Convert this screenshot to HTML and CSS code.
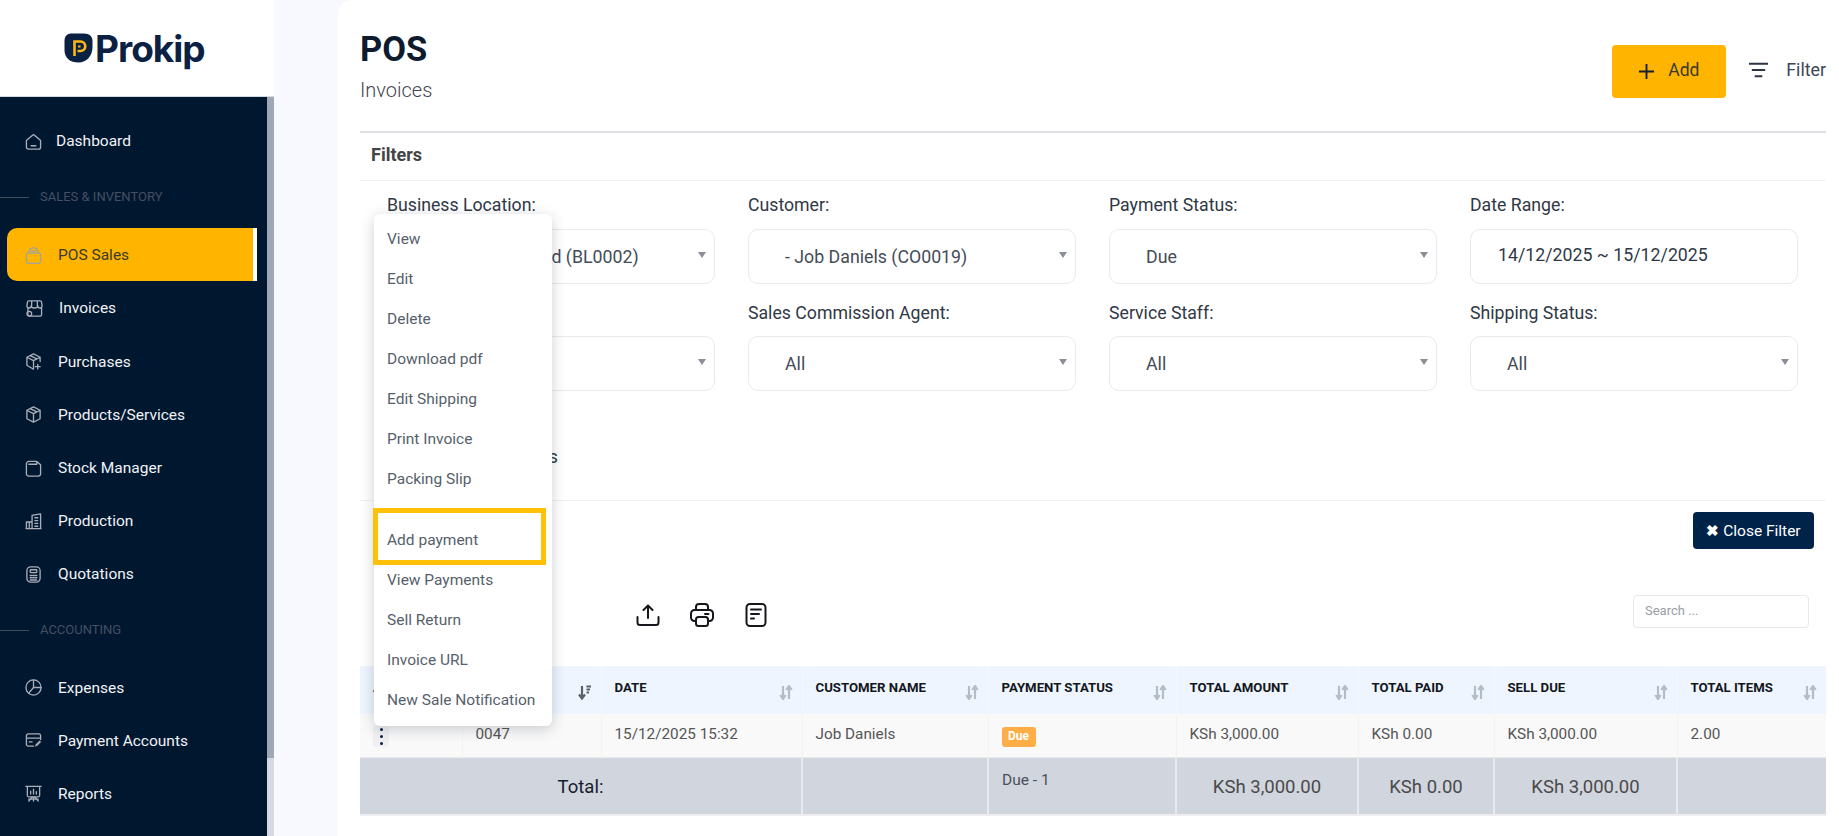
FILE: index.html
```html
<!DOCTYPE html>
<html lang="en">
<head>
<meta charset="utf-8">
<title>POS Invoices</title>
<link rel="stylesheet" href="styles.css">
</head>
<body>
<div class="app">
  <aside class="sidebar">
    <div class="brand">
      <svg class="brand-mark" viewBox="0 0 29 30"><path d="M8 0.500h12c5.500 0 8.500 3 8.500 7.500v6c0 9-6 15.500-14 15.500C6 29.500 0.500 25 0.500 17V8C0.500 3 3 0.500 8 0.500z" fill="#0b2143"/><path d="M10.500 23V8.500h6a4.700 4.700 0 0 1 0 9.500h-3" fill="none" stroke="#fdb913" stroke-width="2.600"/><path d="M14 13.500h2.500" fill="none" stroke="#fdb913" stroke-width="2"/></svg>
      <span class="brand-name">Prokip</span>
    </div>
    <div class="side-body">
      <nav class="nav">
        <a class="nav-item nav-home"><svg class="ico" viewBox="0 0 18 18"><path d="M2 7.500 8 2.300a1.500 1.500 0 0 1 2 0l6 5.200a1.500 1.500 0 0 1 .5 1.100V15a2 2 0 0 1-2 2h-11a2 2 0 0 1-2-2V8.600a1.500 1.500 0 0 1 .5-1.100zM6.500 13.500h5"/></svg><span>Dashboard</span></a>
        <div class="nav-section nav-section-first"><i></i><span>SALES &amp; INVENTORY</span></div>
        <a class="nav-item active"><svg class="ico" viewBox="0 0 18 18"><path d="M3 6.500h12a1.500 1.500 0 0 1 1.500 1.500v6.500a3 3 0 0 1-3 3h-9a3 3 0 0 1-3-3V8A1.500 1.500 0 0 1 3 6.500zM4 6.500C4 3 6 1 9 1s5 2 5 5.500M6.500 4.500h5"/></svg><span>POS Sales</span></a>
        <a class="nav-item nav-inv"><svg class="ico" viewBox="0 0 18 18"><path d="M3 1h12a1.500 1.500 0 0 1 1.500 1.500L17 6c0 1.500-1 2.500-2.200 2.500S12.500 7.500 12.500 6c0 1.500-1.200 2.500-3.500 2.500S5.500 7.500 5.500 6c0 1.500-1 2.500-2.300 2.500S1 7.500 1 6l.5-3.500A1.500 1.500 0 0 1 3 1zM6 1.200V6M12 1.200V6M2 8v7.500A1.500 1.500 0 0 0 3.500 17H15a1.500 1.500 0 0 0 1.500-1.500V8"/><circle cx="3.500" cy="14.500" r="2.500"/></svg><span>Invoices</span></a>
        <a class="nav-item"><svg class="ico" viewBox="0 0 18 18"><path d="M9 1 2 4.500v8.500l6.500 4M9 1l7 3.500V9M2 4.500 9 8l7-3.500M9 8v9M5.500 2.800l7 3.500M13.500 12v5M11 14.500h5"/></svg><span>Purchases</span></a>
        <a class="nav-item"><svg class="ico" viewBox="0 0 18 18"><path d="M9 1 2 4.500v9L9 17l7-3.500v-9zM2 4.500 9 8l7-3.500M9 8v9M5.500 2.800l7 3.500"/></svg><span>Products/Services</span></a>
        <a class="nav-item"><svg class="ico" viewBox="0 0 18 18"><path d="M4 1.500h8.500L16.500 5v9.500a2.500 2.500 0 0 1-2.500 2.500H4a2.500 2.500 0 0 1-2.500-2.500V4A2.500 2.500 0 0 1 4 1.500zM4 4.500h8.500V1.500"/></svg><span>Stock Manager</span></a>
        <a class="nav-item"><svg class="ico" viewBox="0 0 18 18"><path d="M1.500 16.500V9.500h6v7zM7.500 16.500V2.500L16.500 1v15.500zM1 16.500h16M4.500 9.500v7M10.500 5h3M10.500 8h3M10.500 11h3M10.500 14h3"/></svg><span>Production</span></a>
        <a class="nav-item"><svg class="ico" viewBox="0 0 18 18"><rect x="2" y="1" width="14" height="16" rx="4"/><rect x="5.500" y="4" width="7" height="3" rx=".8"/><path d="M5.500 10h1.500M8.300 10h1.500M11 10h1.500M5.500 12.500h1.500M8.300 12.500h1.500M11 12.500h1.500M5.500 14.800h7" stroke-width="1.500"/></svg><span>Quotations</span></a>
        <div class="nav-section"><i></i><span>ACCOUNTING</span></div>
        <a class="nav-item"><svg class="ico" viewBox="0 0 18 18"><circle cx="9" cy="9" r="8"/><path d="M9 1v8h8M9 9l-5 6"/></svg><span>Expenses</span></a>
        <a class="nav-item"><svg class="ico" viewBox="0 0 18 18"><path d="M9 15H3.500a2 2 0 0 1-2-2V4a2 2 0 0 1 2-2h11a2 2 0 0 1 2 2v4M1.500 6.500h15M4.500 10.500h3"/><path class="ico-fill" d="m10 16 1-3 4.500-4.500 2 2L13 15z"/></svg><span>Payment Accounts</span></a>
        <a class="nav-item"><svg class="ico" viewBox="0 0 18 18"><path d="M1 1.500h16M2.500 1.500v9.500a1.500 1.500 0 0 0 1.500 1.500h10a1.500 1.500 0 0 0 1.500-1.500V1.500M6 6.500v3M9 4.500v5M12 7v2.500M9 12.500V17M4 17l4-4.500M14 17l-4-4.500M4 15h10"/></svg><span>Reports</span></a>
      </nav>
      <div class="side-scroll"><div class="side-thumb"></div></div>
    </div>
  </aside>

  <main class="card">
    <header class="page-head">
      <div class="titles">
        <h1>POS</h1>
        <p>Invoices</p>
      </div>
      <div class="head-actions">
        <button class="btn-add"><svg class="plus" viewBox="0 0 18 18"><path d="M9 1v16M1 9h16"/></svg><span>Add</span></button>
        <div class="filter-toggle"><svg class="lines" viewBox="0 0 22 16"><path d="M1 1.500h20M4 8h14M7 14.500h8"/></svg><span>Filter</span></div>
      </div>
    </header>

    <section class="filters">
      <h2>Filters</h2>
      <div class="filter-grid">
        <div class="field"><label>Business Location:</label><div class="select loc">Prokip Co Limited (BL0002)</div></div>
        <div class="field"><label>Customer:</label><div class="select">- Job Daniels (CO0019)</div></div>
        <div class="field"><label>Payment Status:</label><div class="select">Due</div></div>
        <div class="field"><label>Date Range:</label><div class="select date">14/12/2025 ~ 15/12/2025</div></div>
        <div class="field"><label>User:</label><div class="select">All</div></div>
        <div class="field"><label>Sales Commission Agent:</label><div class="select">All</div></div>
        <div class="field"><label>Service Staff:</label><div class="select">All</div></div>
        <div class="field"><label>Shipping Status:</label><div class="select">All</div></div>
      </div>
      <div class="check-row">Subscriptions</div>
      <div class="close-row"><button class="btn-close"><b>✖</b> Close Filter</button></div>
    </section>

    <div class="toolbar">
      <div class="tools">
        <svg class="tool" viewBox="0 0 24 24"><path d="M12 15V2.500M7.500 7 12 2.500 16.500 7M1.500 14v5.500a2.500 2.500 0 0 0 2.500 2.500h16a2.500 2.500 0 0 0 2.500-2.500V14"/></svg>
        <svg class="tool" viewBox="0 0 24 24"><path d="M6 7V4a3 3 0 0 1 3-3h6a3 3 0 0 1 3 3v3M6 18H4.500A3.500 3.500 0 0 1 1 14.500V10.500A3.500 3.500 0 0 1 4.500 7h15a3.500 3.500 0 0 1 3.500 3.500v4a3.500 3.500 0 0 1-3.500 3.500H18M15 11h3.500"/><rect x="6" y="14" width="12" height="9" rx="2.500"/></svg>
        <svg class="tool" viewBox="0 0 24 24"><rect x="2.500" y="1" width="19" height="22" rx="3.500"/><path d="M7 6.500h10M7 11h8M7 15.500h3"/></svg>
      </div>
      <div class="search">Search ...</div>
    </div>

    <table class="grid">
      <colgroup><col class="c1"><col class="c2"><col class="c3"><col class="c4"><col class="c5"><col class="c6"><col class="c7"><col class="c8"><col class="c9"></colgroup>
      <thead>
        <tr>
          <th>ACTION</th>
          <th class="sorted">INVOICE NO.<svg class="sort" viewBox="0 0 14 15"><path d="M4 1v12M1 9.500l3 4 3-4M8.500 1.500H13M8.500 4.500H12M8.500 7.500H11" /></svg></th>
          <th>DATE<svg class="sort" viewBox="0 0 14 15"><path d="M4 1v12M1.300 10 4 14l2.700-4M10 14V2M7.300 5 10 1l2.700 4"/></svg></th>
          <th>CUSTOMER NAME<svg class="sort" viewBox="0 0 14 15"><path d="M4 1v12M1.300 10 4 14l2.700-4M10 14V2M7.300 5 10 1l2.700 4"/></svg></th>
          <th>PAYMENT STATUS<svg class="sort" viewBox="0 0 14 15"><path d="M4 1v12M1.300 10 4 14l2.700-4M10 14V2M7.300 5 10 1l2.700 4"/></svg></th>
          <th>TOTAL AMOUNT<svg class="sort" viewBox="0 0 14 15"><path d="M4 1v12M1.300 10 4 14l2.700-4M10 14V2M7.300 5 10 1l2.700 4"/></svg></th>
          <th>TOTAL PAID<svg class="sort" viewBox="0 0 14 15"><path d="M4 1v12M1.300 10 4 14l2.700-4M10 14V2M7.300 5 10 1l2.700 4"/></svg></th>
          <th>SELL DUE<svg class="sort" viewBox="0 0 14 15"><path d="M4 1v12M1.300 10 4 14l2.700-4M10 14V2M7.300 5 10 1l2.700 4"/></svg></th>
          <th>TOTAL ITEMS<svg class="sort" viewBox="0 0 14 15"><path d="M4 1v12M1.300 10 4 14l2.700-4M10 14V2M7.300 5 10 1l2.700 4"/></svg></th>
        </tr>
      </thead>
      <tbody>
        <tr>
          <td class="cell-action"><span class="kebab"><i></i><i></i><i></i></span></td>
          <td>0047</td>
          <td>15/12/2025 15:32</td>
          <td>Job Daniels</td>
          <td><span class="badge">Due</span></td>
          <td>KSh 3,000.00</td>
          <td>KSh 0.00</td>
          <td>KSh 3,000.00</td>
          <td>2.00</td>
        </tr>
      </tbody>
      <tfoot>
        <tr>
          <td colspan="3" class="foot-label">Total:</td>
          <td></td>
          <td class="foot-status">Due - 1</td>
          <td>KSh 3,000.00</td>
          <td>KSh 0.00</td>
          <td>KSh 3,000.00</td>
          <td></td>
        </tr>
      </tfoot>
    </table>

    <ul class="menu">
      <li>View</li>
      <li>Edit</li>
      <li>Delete</li>
      <li>Download pdf</li>
      <li>Edit Shipping</li>
      <li>Print Invoice</li>
      <li>Packing Slip</li>
      <li class="menu-hl">Add payment</li>
      <li>View Payments</li>
      <li>Sell Return</li>
      <li>Invoice URL</li>
      <li>New Sale Notification</li>
    </ul>
  </main>
</div>
</body>
</html>
```
FILE: styles.css
```css
* { box-sizing: border-box; }
html, body { margin: 0; padding: 0; height: 100%; overflow: hidden; }
body { font-family: Roboto, "Liberation Sans", sans-serif; background: #f8f9fe; color: #333; }
button { font-family: inherit; border: 0; padding: 0; }

.app { display: flex; width: 1839px; height: 836px; overflow: hidden; }

/* sidebar */
.sidebar { width: 274px; flex: none; display: flex; flex-direction: column; }
.brand { height: 97px; background: #fff; border-bottom: 1px solid #d5d8de; display: flex; align-items: flex-start; padding: 32px 0 0 64px; }
.brand-mark { width: 29px; height: 30px; flex: none; margin-top: 1px; }
.brand-name { font-family: Inter, sans-serif; font-weight: 700; font-size: 37px; line-height: 34px; letter-spacing: -1px; color: #0b2143; margin-left: 2px; }
.side-body { flex: 1; display: flex; min-height: 0; }
.nav { width: 267px; background: #001730; padding-top: 16.500px; flex: none; }
.side-scroll { flex: 1; background: #d6d9e1; }
.side-thumb { height: 661px; background: #a0a7b5; }

.nav-item { display: flex; align-items: center; height: 53.200px; padding: 2px 0 0 25px; color: #f0f3f7; font-size: 15.500px; }
.nav-item span { margin-left: 16px; }
.nav-home span { margin-left: 14px; }
.nav-inv { padding-left: 26px; }
.ico { width: 17px; height: 17px; fill: none; stroke: #a8afb9; stroke-width: 1.400; stroke-linecap: round; stroke-linejoin: round; flex: none; }
.ico-fill { fill: #a8afb9; stroke: #001730; stroke-width: .8; }
.nav-section { height: 60px; padding-bottom: 2px; display: flex; align-items: center; color: #454f60; font-size: 13px; }
.nav-section-first { height: 61px; }
.nav-section i { width: 29px; height: 1px; margin-top: 2px; background: #3f4a5a; margin-right: 11px; }
.nav-item.active { margin-left: 7px; width: 250px; padding-left: 18px; background: #ffb400; border-right: 4px solid #fff; border-radius: 10px 0 0 10px; color: #3a3a2c; }
.nav-item.active .ico { stroke: #a5a49a; }

/* card */
.card { position: relative; margin-left: 64px; width: 1501px; height: 836px; background: #fff; border-radius: 14px 0 0 0; padding: 0 13px 0 22px; overflow: hidden; }
.page-head { height: 133px; border-bottom: 2px solid #dfe0e3; display: flex; justify-content: space-between; }
.titles h1 { margin: 30px 0 0; font-size: 34.500px; line-height: 38px; font-weight: 700; color: #0d1b2e; }
.titles p { margin: 10px 0 0; font-size: 20px; line-height: 24px; font-weight: 300; color: #3f4650; }
.head-actions { display: flex; align-items: flex-start; padding-top: 45px; }
.btn-add { width: 114px; height: 53px; background: #ffb400; border-radius: 4px; display: flex; align-items: center; padding: 0 0 4px 26px; font-size: 17.500px; color: #3a3a2c; }
.btn-add span { margin-left: 13px; }
.plus { width: 17px; height: 17px; fill: none; stroke: #15202e; stroke-width: 2; margin-top: 4px; }
.filter-toggle { display: flex; align-items: center; margin-left: 22px; height: 53px; padding-bottom: 4px; color: #3c4656; font-size: 17.800px; }
.filter-toggle span { margin-left: 17px; }
.lines { width: 21px; height: 16px; fill: none; stroke: #2d3644; stroke-width: 2; margin-top: 1px; }

/* filters */
.filters h2 { margin: 0; height: 48px; padding-left: 11px; line-height: 44px; font-size: 18px; font-weight: 700; color: #444; border-bottom: 1px solid #f1f1f3; }
.filter-grid { display: grid; grid-template-columns: repeat(4, 327.500px); column-gap: 33.500px; row-gap: 17px; padding: 12px 0 0 27px; }
.field label { display: block; height: 24px; line-height: 24px; font-size: 17.700px; color: #2f3846; margin-bottom: 11.500px; }
.select { position: relative; height: 55px; border: 1.500px solid #e8eaf0; border-radius: 10px; padding-left: 36px; line-height: 54px; font-size: 17.750px; color: #444c58; }
.select.loc { padding-left: 33.500px; }
.select::after { content: ""; position: absolute; right: 7.500px; top: 22px; border: 4.500px solid transparent; border-top: 6px solid #8a8f97; border-bottom: 0; }
.select.date { padding-left: 27px; line-height: 51px; color: #2f3846; }
.select.date::after { display: none; }
.check-row { height: 110px; padding: 54px 0 0 90px; font-size: 17.700px; line-height: 24px; color: #2f3846; border-bottom: 1px solid #f1f1f3; }
.close-row { display: flex; justify-content: flex-end; padding: 11px 12px 0 0; height: 48px; }
.btn-close { width: 121px; height: 37px; background: #00234a; border-radius: 4px; color: #fff; font-size: 15.500px; }
.btn-close b { font-size: 15px; }

/* toolbar */
.toolbar { display: flex; align-items: center; justify-content: space-between; height: 33px; margin-top: 45.500px; padding: 0 17px 0 276px; }
.tools { display: flex; gap: 30px; margin-top: 8px; }
.tool { width: 24px; height: 24px; fill: none; stroke: #15171a; stroke-width: 2; stroke-linecap: round; stroke-linejoin: round; }
.search { width: 176px; height: 33px; border: 1px solid #e6e8ee; border-radius: 4px; padding-left: 11px; line-height: 29px; font-size: 13px; color: #9a9ea6; }

/* table */
.grid { width: 1466px; margin-top: 38px; border-collapse: collapse; table-layout: fixed; }
.c1 { width: 102px; } .c2 { width: 139px; } .c3 { width: 201px; } .c4 { width: 186px; } .c5 { width: 188px; }
.c6 { width: 182px; } .c7 { width: 136px; } .c8 { width: 183px; } .c9 { width: 149px; }
.grid th { position: relative; height: 48px; padding: 14px 0 0 13px; background: #eef5fe; font-size: 13.200px; line-height: 16px; font-weight: 700; color: #13171d; text-align: left; vertical-align: top; border-left: 1px solid #f4f8fe; white-space: nowrap; overflow: hidden; }
.grid th:first-child { border-left: 0; }
.sort { position: absolute; right: 9px; top: 19px; width: 14px; height: 15px; fill: none; stroke: #b4bcc6; stroke-width: 2.200; }
.sorted .sort { stroke: #5d6066; }
.grid tbody td { height: 44px; padding: 0 0 2px 13px; background: #f9f9f9; font-size: 15.300px; color: #555; border-left: 1px solid #f3f3f3; }
.grid tbody td:first-child { border-left: 0; }
.cell-action { position: relative; }
.kebab { display: flex; flex-direction: column; align-items: center; justify-content: center; gap: 4px; width: 16px; height: 22px; margin: 4px 0 0 0; background: #f0f0f2; border-radius: 4px; }
.kebab i { width: 3px; height: 3px; border-radius: 50%; background: #0b2143; }
.badge { display: inline-block; width: 34px; height: 20px; line-height: 19px; margin-top: 5px; border-radius: 3px; background: #ffad46; color: #fff; font-size: 12px; font-weight: 700; text-align: center; }
.grid tfoot td { height: 57px; padding: 2px 0 0; background: #d1d5de; font-size: 18.500px; color: #4a4a4a; text-align: center; border-left: 2px solid #e9eaee; border-top: 1px solid #e9eaee; border-bottom: 2px solid #eceef1; }
.grid tfoot td:first-child { border-left: 0; color: #15202e; }
.grid tfoot .foot-status { font-size: 15.500px; text-align: left; padding: 13px 0 0 13px; vertical-align: top; color: #4a4f58; }

/* dropdown */
.menu { position: absolute; left: 36px; top: 214px; width: 178px; height: 512px; margin: 0; padding: 5px 0 0; list-style: none; background: #fff; border-radius: 6px; box-shadow: 0 3px 14px rgba(30, 40, 60, .22); }
.menu li { height: 40px; padding-left: 13px; line-height: 40px; font-size: 15.500px; color: #565f6c; white-space: nowrap; }
.menu .menu-hl { height: 57px; width: 173px; margin: 9px 0 -5px -1px; padding-left: 9px; padding-top: 7px; border: 5px solid #fec107; line-height: 40px; color: #565f6c; }
```
